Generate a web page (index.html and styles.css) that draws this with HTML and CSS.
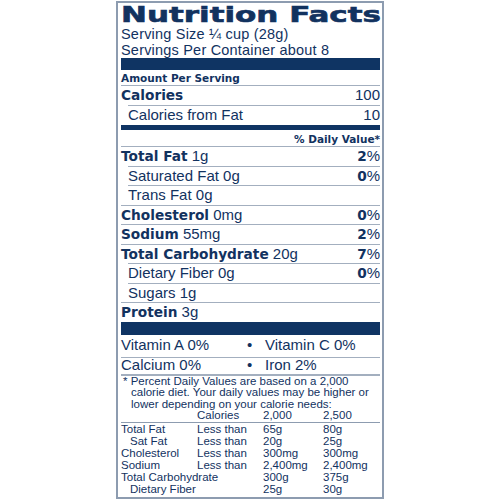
FILE: index.html
```html
<!DOCTYPE html>
<html lang="en">
<head>
  <meta charset="UTF-8">
  <title>Nutrition Facts</title>
  <link rel="stylesheet" href="styles.css">
</head>
<body>

  <div class="label">
    <h1 class="title"><span>Nutrition Facts</span></h1>
    <div class="servings">
      <p>Serving Size ¼ cup (28g)</p>
      <p>Servings Per Container about 8</p>
    </div>

    <div class="bar thick"></div>
    <div class="small-head">Amount Per Serving</div>
    <div class="row tall"><span><b>Calories</b></span><span>100</span></div>
    <div class="row tall sub"><span>Calories from Fat</span><span>10</span></div>

    <div class="bar medium"></div>
    <div class="small-head dv">% Daily Value*</div>
    <div class="row"><span><b>Total Fat</b> 1g</span><span><b>2</b>%</span></div>
    <div class="row sub"><span>Saturated Fat 0g</span><span><b>0</b>%</span></div>
    <div class="row sub"><span>Trans Fat 0g</span></div>
    <div class="row"><span><b>Cholesterol</b> 0mg</span><span><b>0</b>%</span></div>
    <div class="row"><span><b>Sodium</b> 55mg</span><span><b>2</b>%</span></div>
    <div class="row"><span><b>Total Carbohydrate</b> 20g</span><span><b>7</b>%</span></div>
    <div class="row sub"><span>Dietary Fiber 0g</span><span><b>0</b>%</span></div>
    <div class="row sub"><span>Sugars 1g</span></div>
    <div class="row last"><span><b>Protein</b> 3g</span></div>

    <div class="bar thick wide"></div>
    <div class="vitamins first"><span>Vitamin A 0%</span><span class="dot">•</span><span>Vitamin C 0%</span></div>
    <div class="vitamins second"><span>Calcium 0%</span><span class="dot">•</span><span>Iron 2%</span></div>

    <div class="footnote">
      <p class="note">* Percent Daily Values are based on a 2,000<br>calorie diet. Your daily values may be higher or<br>lower depending on your calorie needs:</p>
      <div class="table head">
        <span></span><span>Calories</span><span>2,000</span><span>2,500</span>
      </div>
      <div class="table">
        <span>Total Fat</span><span>Less than</span><span>65g</span><span>80g</span>
        <span class="ind">Sat Fat</span><span>Less than</span><span>20g</span><span>25g</span>
        <span>Cholesterol</span><span>Less than</span><span>300mg</span><span>300mg</span>
        <span>Sodium</span><span>Less than</span><span>2,400mg</span><span>2,400mg</span>
        <span class="span2">Total Carbohydrate</span><span>300g</span><span>375g</span>
        <span class="ind span2">Dietary Fiber</span><span>25g</span><span>30g</span>
      </div>
    </div>
  </div>

</body>
</html>
```

FILE: styles.css
```css
* {
  margin: 0;
  padding: 0;
  box-sizing: border-box;
}

body {
  background: #fff;
  color: #12325f;
  font-family: 'Liberation Sans', Arial, sans-serif;
}

.label {
  width: 268px;
  height: 498px;
  margin: 1px auto 0;
  border: 2px solid #8d9cb0;
  padding: 0 2px 0 3px;
}

.title {
  font-family: 'DejaVu Sans', sans-serif;
  font-weight: bold;
  font-size: 21.5px;
  line-height: 21px;
  height: 22px;
  padding-top: 0.5px;
  white-space: nowrap;
}

.title span {
  display: inline-block;
  transform: scaleX(1.44);
  transform-origin: left center;
  -webkit-text-stroke: 0.6px #12325f;
}

.servings {
  margin-top: 2px;
  font-size: 14.5px;
  letter-spacing: 0.2px;
  line-height: 15.5px;
  white-space: nowrap;
}

.bar {
  background: #0f3463;
}

.bar.thick {
  height: 12px;
}

.bar.thick.wide {
  height: 13px;
}

.bar.medium {
  height: 5px;
}

.small-head {
  font-family: 'DejaVu Sans', sans-serif;
  font-weight: bold;
  font-size: 10.5px;
  line-height: 14px;
  height: 15px;
  padding-top: 1px;
}

.small-head.dv {
  height: 16px;
  padding-top: 1.5px;
  text-align: right;
}

.row {
  display: flex;
  justify-content: space-between;
  border-top: 1px solid #a3afbf;
  height: 19.5px;
  font-size: 15px;
  line-height: 17px;
  white-space: nowrap;
}

.row.tall,
.row.last {
  height: 20px;
}

.row.sub {
  margin-left: 7px;
}

.row b {
  font-family: 'DejaVu Sans', sans-serif;
  font-weight: bold;
  font-size: 13.7px;
}

.vitamins {
  display: grid;
  grid-template-columns: 124px 20px 1fr;
  font-size: 15px;
  white-space: nowrap;
}

.vitamins.first {
  height: 22px;
  line-height: 17px;
  padding-top: 1px;
}

.vitamins.second {
  height: 19px;
  line-height: 13px;
  border-top: 1px solid #a3afbf;
  border-bottom: 2px solid #a3afbf;
}

.dot {
  padding-left: 2px;
}

.footnote {
  font-size: 11.5px;
  line-height: 11.4px;
  white-space: nowrap;
}

.note {
  padding-left: 10px;
  text-indent: -8px;
}

.table {
  display: grid;
  grid-template-columns: 76px 66px 60px 1fr;
  line-height: 12px;
}

.table.head {
  line-height: 11.4px;
  border-bottom: 1px solid #8d9cb0;
}

.table .ind {
  padding-left: 9px;
}

.table .span2 {
  grid-column: span 2;
}
```
